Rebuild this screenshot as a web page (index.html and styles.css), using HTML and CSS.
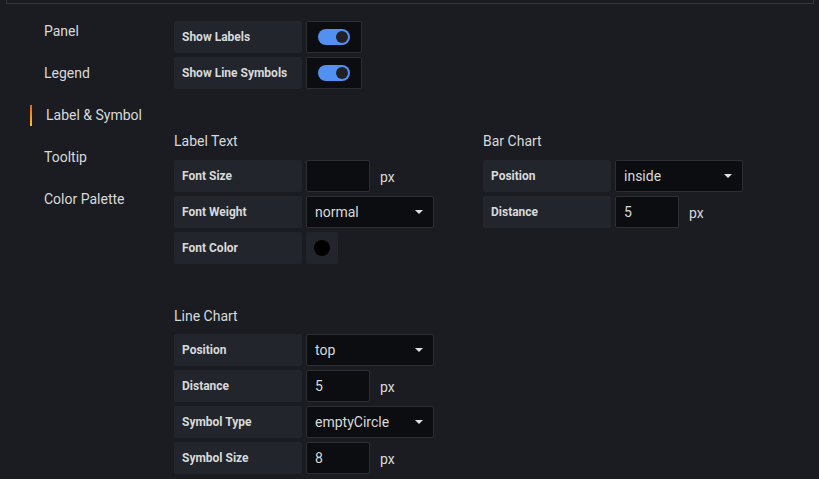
FILE: index.html
```html
<!DOCTYPE html>
<html>
<head>
<meta charset="utf-8">
<link rel="stylesheet" href="styles.css">
</head>
<body>
<div class="topbox"></div>
<div class="layout">
  <nav class="sidebar">
    <div class="nav-item">Panel</div>
    <div class="nav-item">Legend</div>
    <div class="nav-item active">Label &amp; Symbol</div>
    <div class="nav-item">Tooltip</div>
    <div class="nav-item">Color Palette</div>
  </nav>
  <main class="content">
    <div class="group top-group">
      <div class="row">
        <div class="label">Show Labels</div>
        <div class="switch-box"><span class="switch"><span class="knob"></span></span></div>
      </div>
      <div class="row">
        <div class="label">Show Line Symbols</div>
        <div class="switch-box"><span class="switch"><span class="knob"></span></span></div>
      </div>
    </div>
    <div class="columns">
      <section class="group col">
        <h3 class="heading">Label Text</h3>
        <div class="row">
          <div class="label">Font Size</div>
          <div class="input"></div>
          <span class="unit">px</span>
        </div>
        <div class="row">
          <div class="label">Font Weight</div>
          <div class="select"><span>normal</span><span class="caret"></span></div>
        </div>
        <div class="row">
          <div class="label">Font Color</div>
          <div class="color-box"><span class="dot"></span></div>
        </div>
      </section>
      <section class="group col">
        <h3 class="heading">Bar Chart</h3>
        <div class="row">
          <div class="label">Position</div>
          <div class="select"><span>inside</span><span class="caret"></span></div>
        </div>
        <div class="row">
          <div class="label">Distance</div>
          <div class="input">5</div>
          <span class="unit">px</span>
        </div>
      </section>
    </div>
    <section class="group">
      <h3 class="heading heading-tight">Line Chart</h3>
      <div class="row">
        <div class="label">Position</div>
        <div class="select"><span>top</span><span class="caret"></span></div>
      </div>
      <div class="row">
        <div class="label">Distance</div>
        <div class="input">5</div>
        <span class="unit">px</span>
      </div>
      <div class="row">
        <div class="label">Symbol Type</div>
        <div class="select"><span>emptyCircle</span><span class="caret"></span></div>
      </div>
      <div class="row">
        <div class="label">Symbol Size</div>
        <div class="input">8</div>
        <span class="unit">px</span>
      </div>
    </section>
  </main>
</div>
</body>
</html>
```

FILE: styles.css
```css
html, body {
  margin: 0;
  padding: 0;
  background: #1a1c21;
  color: #d8d9da;
  font-family: Roboto, "Liberation Sans", sans-serif;
  height: 100%;
  overflow: hidden;
}

.topbox {
  height: 4px;
  box-sizing: border-box;
  margin: 0 5px 0 6px;
  border: 1px solid #33363c;
  border-top: none;
}

.layout {
  display: flex;
}

.sidebar {
  width: 144px;
  padding: 17px 0 0 30px;
  flex: none;
}

.nav-item {
  height: 21px;
  line-height: 21px;
  font-size: 14px;
  padding-left: 14px;
  margin-bottom: 21px;
}

.nav-item.active {
  padding-left: 14px;
  border-left: 2px solid transparent;
  border-image: linear-gradient(#f05a28, #fbca0a) 1;
}

.content {
  padding-top: 17px;
}

.top-group {
  margin-bottom: 43px;
}

.columns {
  display: flex;
  margin-bottom: 39px;
}

.col {
  width: 309px;
}

.heading {
  margin: 0 0 10px 0;
  font-size: 14px;
  font-weight: 400;
  line-height: 18px;
  height: 18px;
}

.heading-tight {
  margin-bottom: 9px;
}

.row {
  display: flex;
  align-items: center;
  height: 32px;
  margin-bottom: 4px;
}

.label {
  width: 128px;
  height: 32px;
  box-sizing: border-box;
  padding: 0 8px;
  margin-right: 4px;
  background: #22252b;
  border-radius: 2px;
  font-size: 12px;
  font-weight: 700;
  line-height: 32px;
  white-space: nowrap;
}

.switch-box {
  width: 56px;
  height: 32px;
  box-sizing: border-box;
  border: 1px solid #2b2e33;
  background: #0c0d10;
  border-radius: 2px;
  display: flex;
  align-items: center;
  padding-left: 11px;
}

.switch {
  width: 32px;
  height: 16px;
  border-radius: 8px;
  background: #5291f1;
  position: relative;
  display: block;
}

.knob {
  position: absolute;
  right: 2px;
  top: 2px;
  width: 12px;
  height: 12px;
  border-radius: 50%;
  background: #202226;
}

.input, .select {
  height: 32px;
  box-sizing: border-box;
  border: 1px solid #2b2e33;
  background: #0c0d10;
  border-radius: 2px;
  font-size: 14px;
  line-height: 30px;
  padding: 0 8px;
}

.input {
  width: 64px;
}

.select {
  width: 128px;
  display: flex;
  justify-content: space-between;
  align-items: center;
  padding-right: 10px;
}

.caret {
  width: 0;
  height: 0;
  border-left: 4px solid transparent;
  border-right: 4px solid transparent;
  border-top: 4px solid #e0e1e3;
}

.unit {
  margin-left: 10px;
  font-size: 14px;
  padding-top: 2px;
}

.color-box {
  width: 32px;
  height: 32px;
  background: #22252b;
  border-radius: 2px;
  display: flex;
  align-items: center;
  justify-content: center;
}

.dot {
  width: 16px;
  height: 16px;
  border-radius: 50%;
  background: #000;
}
```
